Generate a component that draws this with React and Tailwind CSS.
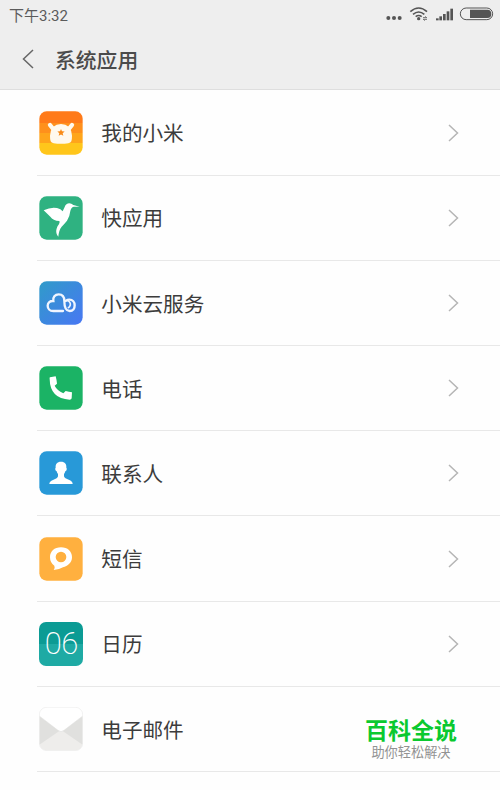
import React from 'react';

function Tile({ fill, children }) {
  return (
    <svg className="block h-[44px] w-[44px] shrink-0" viewBox="0 0 132 132">
      <rect x="1" y="1" width="130" height="130" rx="22" fill={fill} />
      {children}
    </svg>
  );
}

function MiIcon() {
  return (
    <Tile fill="url(#mi)">
      <defs>
        <linearGradient id="mi" x1="0" y1="0" x2="0" y2="1">
          <stop offset="0.27" stopColor="#ff7a19" />
          <stop offset="0.27" stopColor="#ff901c" />
          <stop offset="0.5" stopColor="#ff901c" />
          <stop offset="0.5" stopColor="#ffa51b" />
          <stop offset="0.74" stopColor="#ffa51b" />
          <stop offset="0.74" stopColor="#ffc61b" />
        </linearGradient>
      </defs>
      <path d="M33 42L45 57M99 42L87 57" stroke="#fff9ee" strokeWidth="13" strokeLinecap="round" />
      <path
        d="M42 48Q52 39 66 39Q80 39 90 48Q98 58 99 74Q99 86 97 91Q95 96 88 97Q66 100 44 97Q37 96 35 91Q33 86 33 74Q34 58 42 48Z"
        fill="#fff9ee"
      />
      <path d="M66 54l3 7 8 .6-6 5 2 8-7-4.300-7 4.300 2-8-6-5 8-.6z" fill="#f98a16" />
    </Tile>
  );
}

function BirdIcon() {
  return (
    <Tile fill="#2fb281">
      <path
        d="M14 43Q36 32 54 36Q66 39 71 46L77 33Q81 22 91 22Q97 23 103 27L122 32L104 32Q96 34 94 45Q92 63 84 74Q76 84 68 92Q60 101 58 122C50 112 50 102 56 90Q64 80 61 75Q42 74 34 62Q24 53 14 43Z"
        fill="#fff"
      />
    </Tile>
  );
}

function CloudIcon() {
  return (
    <Tile fill="url(#cloud)">
      <defs>
        <linearGradient id="cloud" x1="0" y1="0" x2="1" y2="1">
          <stop stopColor="#309bc9" />
          <stop offset="1" stopColor="#4877f3" />
        </linearGradient>
      </defs>
      <g fill="none" stroke="#eff5ff" strokeLinecap="round">
        <path
          d="M72 90H43C32 90 26 83 26 74C26 65 33 59 43 60C41 49 48 40 59 40C70 40 76 48 76 60C76 75 78 90 92 90C102 90 107 83 107 73C107 63 101 56 91 56C87 56 84 57 81 59"
          strokeWidth="7"
        />
        <path d="M84 58Q95 62 94 72Q92 78 88 80" strokeWidth="5" />
      </g>
    </Tile>
  );
}

function PhoneIcon() {
  return (
    <Tile fill="#1bb365">
      <path
        d="M33 34L50 31Q53 42 54 53L47 59Q54 73 73 82L80 75Q90 77 99 79L98 97Q97 101 92 101Q33 98 32 39Q31 35 33 34Z"
        fill="#fff"
      />
    </Tile>
  );
}

function ContactIcon() {
  return (
    <Tile fill="#2899d8">
      <path
        d="M66 32C78 32 83 39 82 50Q84 51 83 56Q82 60 79 61Q77 67 75 69V76Q76 82 91 87Q101 91 101 99H31Q31 91 42 87Q56 82 57 76V69Q54 66 53 61Q50 60 49 56Q48 51 50 50C49 39 54 32 66 32Z"
        fill="#fff"
      />
    </Tile>
  );
}

function MessageIcon() {
  return (
    <Tile fill="#ffb03f">
      <path
        fillRule="evenodd"
        d="M66 31C86 31 99 43 99 61C99 77 86 88 72 91Q62 97 44 99Q49 93 46 86Q33 77 33 61C33 43 46 31 66 31ZM66 44A16 16 0 1 0 66 76A16 16 0 1 0 66 44Z"
        fill="#fff"
      />
    </Tile>
  );
}

function CalendarIcon() {
  return (
    <div className="flex h-[44px] w-[44px] shrink-0 items-center justify-center rounded-[7px] bg-linear-to-b from-[#0b9b94] from-50% to-[#1eaaa4] to-50%">
      <span className="font-['Roboto'] text-[31px] leading-none font-extralight tracking-[-0.500px] text-white">06</span>
    </div>
  );
}

function MailIcon() {
  return (
    <Tile fill="#eeedeb">
      <defs>
        <clipPath id="mail">
          <rect x="1" y="1" width="130" height="130" rx="22" />
        </clipPath>
      </defs>
      <g clipPath="url(#mail)">
        <path d="M0 26L60 73L0 114Z M132 26L72 73L132 114Z" fill="#e0e0de" />
        <path d="M0 0H132V27L75 70Q66 78 57 70L0 27Z" fill="#fff" />
        <path d="M1 27L57 70Q66 78 75 70L131 27" fill="none" stroke="#d9d9d7" strokeWidth="1.500" />
      </g>
      <rect x="1" y="1" width="130" height="130" rx="22" fill="none" stroke="#eeeeee" strokeWidth="2" />
    </Tile>
  );
}

const rows = [
  ['我的小米', MiIcon],
  ['快应用', BirdIcon],
  ['小米云服务', CloudIcon],
  ['电话', PhoneIcon],
  ['联系人', ContactIcon],
  ['短信', MessageIcon],
  ['日历', CalendarIcon],
  ['电子邮件', MailIcon],
];

function StatusIcons() {
  return (
    <svg className="h-[30px] w-[130px]" viewBox="0 0 390 90">
      <g fill="#555">
        <circle cx="55" cy="54" r="6" />
        <circle cx="72" cy="54" r="6" />
        <circle cx="89" cy="54" r="6" />
        <circle cx="146" cy="56" r="5" />
        <rect x="198" y="55" width="8" height="6" />
        <rect x="208" y="49" width="8" height="12" />
        <rect x="219" y="42" width="8" height="19" />
        <rect x="230" y="34" width="8" height="27" />
        <rect x="241" y="26" width="8" height="35" />
        <path d="M300 29H352Q364 29 364 42Q364 54 352 54H300Z" />
      </g>
      <g fill="none" stroke="#555">
        <path d="M121 35Q146 13 171 35M129 43Q146 29 163 43M137 50Q146 43 155 50" strokeWidth="5" />
        <path d="M159 53H170L166 49M171 58H160L164 62" strokeWidth="2.500" />
        <rect x="271" y="24" width="97" height="35" rx="17.500" strokeWidth="3" />
      </g>
    </svg>
  );
}

export default function App() {
  return (
    <div className="relative h-[790px] w-[500px] overflow-hidden bg-[#fefefe] font-['Roboto','Noto_Sans_CJK_SC',sans-serif] text-[#3c3c3c]">
      <header className="h-[90px] border-b border-[#dedede] bg-[#eeeeee]">
        <div className="flex h-[30px] items-center justify-between pl-[9px]">
          <span className="pt-[2px] text-[15px] leading-none text-[#5b5b5b]">下午3:32</span>
          <StatusIcons />
        </div>
        <div className="flex h-[57px] items-center pl-[22px]">
          <svg className="h-[20px] w-[12px]" viewBox="0 0 12 20">
            <path d="M11 1L1.500 10L11 19" fill="none" stroke="#666" strokeWidth="1.500" />
          </svg>
          <h1 className="ml-[21px] pt-[5px] text-[20.800px] leading-none font-medium text-[#4b4b4b]">系统应用</h1>
        </div>
      </header>
      <main className="pt-[0.500px] pl-[37px]">
        {rows.map(([label, Icon]) => (
          <div key={label} className="flex h-[85.200px] items-center border-b border-[#e8e8e8] pr-[41px] pl-[2.300px]">
            <Icon />
            <span className="ml-[18px] flex-1 pt-[4px] text-[20.600px] leading-none">{label}</span>
            {label !== '电子邮件' && (
              <svg className="h-[18px] w-[11px]" viewBox="0 0 11 18">
                <path d="M1 1L9.500 9L1 17" fill="none" stroke="#b5b5b5" strokeWidth="1.500" />
              </svg>
            )}
          </div>
        ))}
      </main>
      <div className="absolute top-[720px] left-[361px] w-[100px] text-center whitespace-nowrap">
        <div className="text-[23px] leading-[24px] font-bold text-[#0ac92f]">百科全说</div>
        <div className="text-[13.200px] leading-[17px] text-[#929292]">助你轻松解决</div>
      </div>
    </div>
  );
}
